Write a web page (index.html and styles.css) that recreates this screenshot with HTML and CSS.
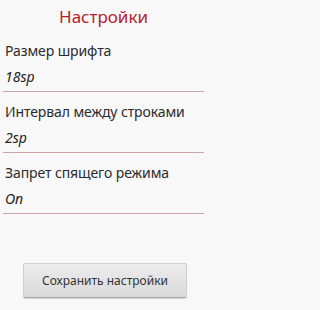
FILE: index.html
```html
<!DOCTYPE html>
<html lang="ru">
<head>
<meta charset="utf-8">
<title>Настройки</title>
<link rel="stylesheet" href="styles.css">
</head>
<body>
<div class="page">
  <h1 class="title">Настройки</h1>
  <div class="setting">
    <div class="label">Размер шрифта</div>
    <div class="value">18sp</div>
  </div>
  <div class="setting">
    <div class="label">Интервал между строками</div>
    <div class="value">2sp</div>
  </div>
  <div class="setting">
    <div class="label">Запрет спящего режима</div>
    <div class="value">On</div>
  </div>
  <div class="actions">
    <button class="save">Сохранить настройки</button>
  </div>
</div>
</body>
</html>
```
FILE: styles.css
```css
html, body {
  margin: 0;
  padding: 0;
  background: #f8f8f8;
}
.page {
  width: 207px;
  height: 310px;
  display: flex;
  flex-direction: column;
  font-family: "Noto Sans", "Open Sans", "DejaVu Sans", sans-serif;
}
.title {
  margin: 0;
  padding: 5px 0 2px;
  font-size: 17px;
  line-height: 24px;
  font-weight: normal;
  text-align: center;
  color: #b3232b;
}
.setting {
  margin: 0 3px;
  padding: 10px 0 4px 2px;
  border-bottom: 1px solid #cfa3a3;
  display: flex;
  flex-direction: column;
  gap: 6px;
}
.label {
  font-size: 14px;
  line-height: 20px;
  letter-spacing: -0.1px;
  color: #2b2b2b;
}
.value {
  font-size: 14px;
  line-height: 20px;
  font-style: italic;
  color: #222;
}
.actions {
  margin-top: auto;
  margin-bottom: 12px;
  display: flex;
  justify-content: center;
}
.save {
  width: 164px;
  height: 35px;
  margin-left: 3px;
  border: 1px solid #d0d0d0;
  border-bottom-color: #a8a8a8;
  border-radius: 2px;
  background: linear-gradient(#ededed, #d9d9d9);
  box-shadow: 0 1px 1px rgba(0,0,0,0.15);
  font-family: "Noto Sans", "Open Sans", "DejaVu Sans", sans-serif;
  font-size: 12px;
  color: #333;
  padding: 0;
}
```
